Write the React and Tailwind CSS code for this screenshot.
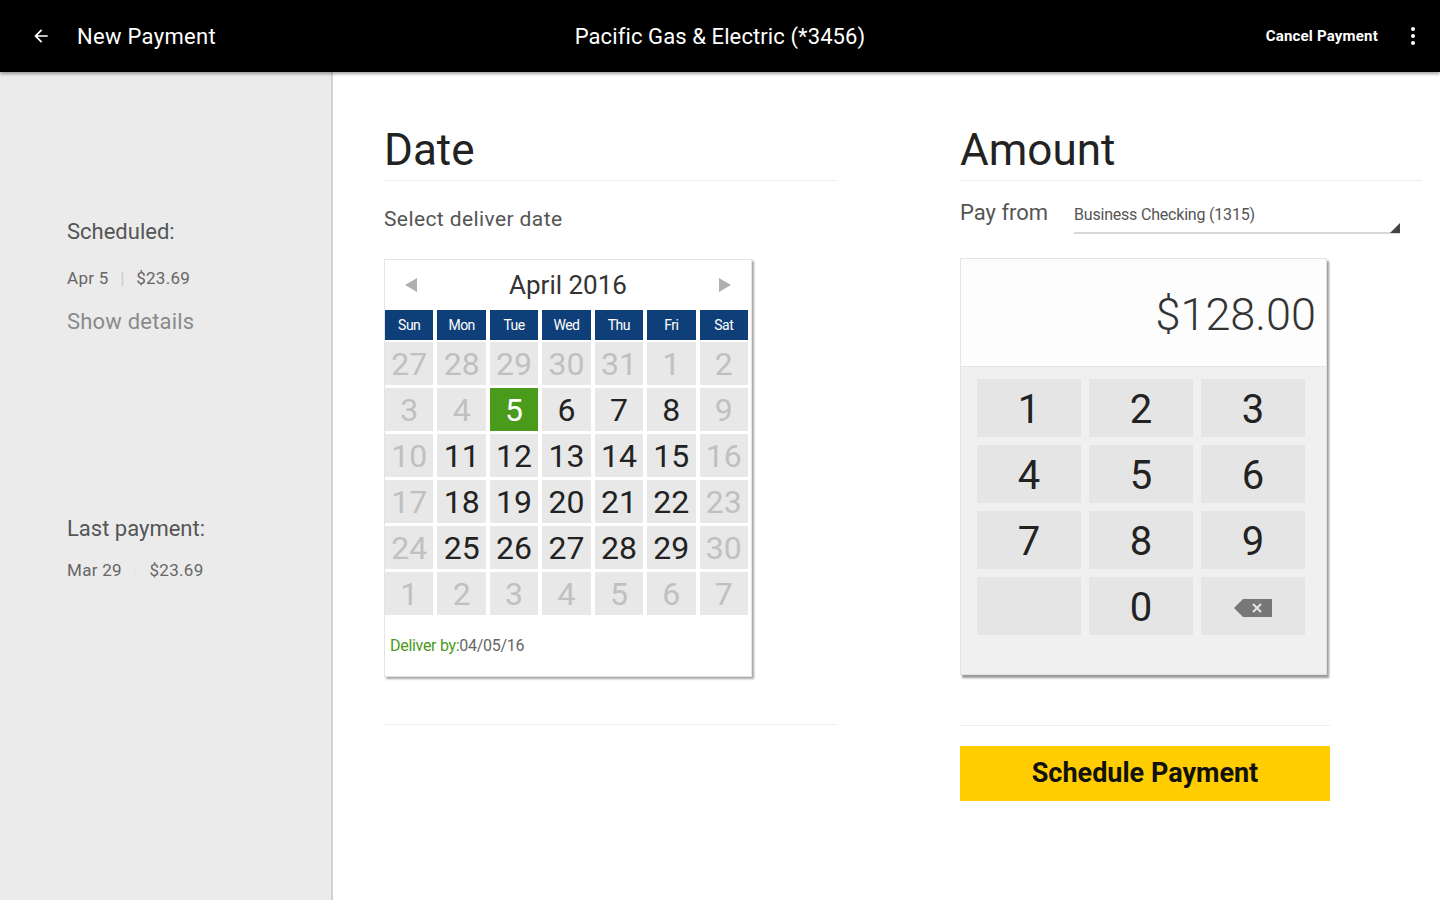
import React from 'react';

const days = ['Sun', 'Mon', 'Tue', 'Wed', 'Thu', 'Fri', 'Sat'];

// [label, state] state: o = other/disabled, a = available, s = selected
const weeks = [
  [['27', 'o'], ['28', 'o'], ['29', 'o'], ['30', 'o'], ['31', 'o'], ['1', 'o'], ['2', 'o']],
  [['3', 'o'], ['4', 'o'], ['5', 's'], ['6', 'a'], ['7', 'a'], ['8', 'a'], ['9', 'o']],
  [['10', 'o'], ['11', 'a'], ['12', 'a'], ['13', 'a'], ['14', 'a'], ['15', 'a'], ['16', 'o']],
  [['17', 'o'], ['18', 'a'], ['19', 'a'], ['20', 'a'], ['21', 'a'], ['22', 'a'], ['23', 'o']],
  [['24', 'o'], ['25', 'a'], ['26', 'a'], ['27', 'a'], ['28', 'a'], ['29', 'a'], ['30', 'o']],
  [['1', 'o'], ['2', 'o'], ['3', 'o'], ['4', 'o'], ['5', 'o'], ['6', 'o'], ['7', 'o']],
];

const keys = ['1', '2', '3', '4', '5', '6', '7', '8', '9', '', '0', 'del'];

const Header = () => (
  <div className="h-[72px] bg-black text-white flex items-center relative shadow-[0_2px_3px_rgba(0,0,0,0.35)] z-10">
    <svg width="20" height="20" viewBox="0 0 24 24" className="ml-[31px]">
      <path d="M20 11H7.83l5.59-5.59L12 4l-8 8 8 8 1.41-1.41L7.83 13H20v-2z" fill="white" />
    </svg>
    <span className="ml-[26px] text-[22px] tracking-[0.3px]">New Payment</span>
    <span className="absolute left-1/2 -translate-x-1/2 text-[22px] tracking-[0.1px]">Pacific Gas &amp; Electric (*3456)</span>
    <span className="ml-auto text-[15px] font-bold tracking-[0.2px]">Cancel Payment</span>
    <div className="ml-[33px] mr-[25px] flex flex-col gap-[3px]">
      <span className="w-[4px] h-[4px] bg-white rounded-full" />
      <span className="w-[4px] h-[4px] bg-white rounded-full" />
      <span className="w-[4px] h-[4px] bg-white rounded-full" />
    </div>
  </div>
);

const Sidebar = () => (
  <div className="w-[333px] shrink-0 bg-[#ebebeb] border-r-2 border-[#d2d2d2] pl-[67px] text-[#555]">
    <p className="mt-[146px] text-[22px] leading-[28px]">Scheduled:</p>
    <p className="mt-[22px] text-[17px] leading-[20px] text-[#666] tracking-[0.3px]">
      Apr 5 <span className="mx-[7px] text-[#ccc]">|</span> $23.69
    </p>
    <p className="mt-[20px] text-[22px] leading-[28px] text-[#8a8a8a] tracking-[0.2px]">Show details</p>
    <p className="mt-[179px] text-[22px] leading-[28px]">Last payment:</p>
    <p className="mt-[17px] text-[17px] leading-[20px] text-[#666] tracking-[0.3px]">
      Mar 29 <span className="mx-[7px] text-[#e6e6e6]">|</span> $23.69
    </p>
  </div>
);

const Calendar = () => (
  <div className="w-[368px] bg-white border border-[#e4e4e4] shadow-[2px_2px_2px_rgba(0,0,0,0.35)]">
    <div className="h-[50px] flex items-center justify-between px-[20px]">
      <svg width="12" height="14" viewBox="0 0 12 14"><path d="M12 0L0 7l12 7z" fill="#b0b0b0" /></svg>
      <span className="text-[26px] text-[#333]">April 2016</span>
      <svg width="12" height="14" viewBox="0 0 12 14"><path d="M0 0l12 7-12 7z" fill="#b0b0b0" /></svg>
    </div>
    <div className="grid grid-cols-7 gap-x-[4px] pr-[3px]">
      {days.map((d) => (
        <div key={d} className="h-[30px] bg-[#0f3f78] text-white text-[14px] flex items-center justify-center tracking-[-0.5px]">{d}</div>
      ))}
    </div>
    <div className="grid grid-cols-7 gap-x-[4px] gap-y-[3px] pr-[3px] mt-[2px]">
      {weeks.flat().map(([n, s], i) => (
        <div
          key={i}
          className={`h-[43px] flex items-center justify-center text-[32px] ${
            s === 's' ? 'bg-[#4a9a1c] text-white' : s === 'a' ? 'bg-[#e8e8e8] text-[#222]' : 'bg-[#e8e8e8] text-[#c0c0c0]'
          }`}
        >
          {n}
        </div>
      ))}
    </div>
    <div className="h-[61px] flex items-center pl-[5px] text-[16px] tracking-[-0.3px]">
      <span className="text-[#4a9a1c]">Deliver by:</span>
      <span className="text-[#666]">04/05/16</span>
    </div>
  </div>
);

const Keypad = () => (
  <div className="w-[367px] bg-[#f0f0f0] border border-[#e4e4e4] shadow-[2px_3px_2px_rgba(0,0,0,0.4)]">
    <div className="h-[108px] bg-[#fdfdfd] border-b border-[#e6e6e6] flex items-center justify-end pr-[10px] pt-[4px]">
      <span className="text-[45px] font-light text-[#333]">$128.00</span>
    </div>
    <div className="grid grid-cols-3 gap-x-[8px] gap-y-[8px] pl-[16px] pr-[21px] pt-[12px] pb-[39px]">
      {keys.map((k, i) => (
        <div key={i} className="h-[58px] bg-[#e5e5e5] flex items-center justify-center text-[40px] text-[#222] pt-[4px]">
          {k === 'del' ? (
            <svg width="38" height="18" viewBox="0 0 38 18">
              <path d="M9 0h29v18H9L0 9z" fill="#777" />
              <path d="M19 5l8 8M27 5l-8 8" stroke="#e5e5e5" strokeWidth="2" />
            </svg>
          ) : (
            k
          )}
        </div>
      ))}
    </div>
  </div>
);

export default function App() {
  return (
    <div className="w-[1440px] h-[900px] flex flex-col overflow-hidden" style={{ fontFamily: 'Roboto, "Noto Sans", sans-serif' }}>
      <Header />
      <div className="flex flex-1">
        <Sidebar />
        <div className="flex-1 bg-white flex pl-[51px] pt-[54px]">
          {/* Date */}
          <div className="w-[452px]">
            <h2 className="text-[44px] leading-[48px] text-[#222] pb-[6px] border-b border-[#eeeeee]">Date</h2>
            <p className="mt-[26px] text-[21px] leading-[24px] text-[#555] tracking-[0.4px]">Select deliver date</p>
            <div className="mt-[28px]">
              <Calendar />
            </div>
            <div className="mt-[47px] border-t border-[#eeeeee]" />
          </div>
          {/* Amount */}
          <div className="w-[462px] ml-[124px]">
            <h2 className="text-[44px] leading-[48px] text-[#222] pb-[6px] border-b border-[#eeeeee]">Amount</h2>
            <div className="mt-[19px] flex items-start">
              <span className="text-[22px] leading-[26px] text-[#555] w-[114px]">Pay from</span>
              <div className="relative w-[326px] h-[34px] border-b-2 border-[#d8d8d8] flex items-start pt-[3px]">
                <span className="text-[16px] text-[#555] tracking-[-0.2px]">Business Checking (1315)</span>
                <svg width="10" height="10" viewBox="0 0 10 10" className="absolute right-0 bottom-[-1px]">
                  <path d="M10 0v10H0z" fill="#444" />
                </svg>
              </div>
            </div>
            <div className="mt-[24px]">
              <Keypad />
            </div>
            <div className="mt-[50px] w-[370px] border-t border-[#eeeeee]" />
            <button className="mt-[20px] w-[370px] h-[55px] bg-[#ffcd00] text-[27px] font-bold text-[#111] flex items-center justify-center">
              Schedule Payment
            </button>
          </div>
        </div>
      </div>
    </div>
  );
}
